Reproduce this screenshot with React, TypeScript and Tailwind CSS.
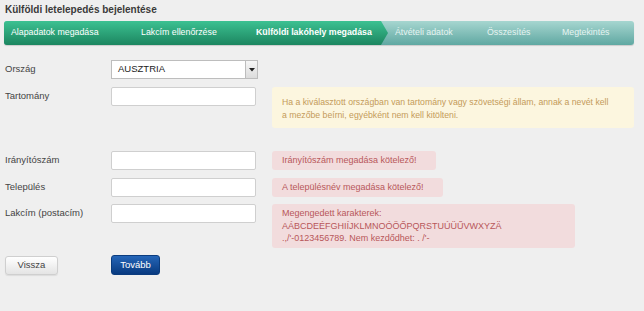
import React from 'react';

const font = "font-['Liberation_Sans',Arial,sans-serif]";

const steps = [
  { label: 'Alapadatok megadása', w: 'w-[130px]', done: true },
  { label: 'Lakcím ellenőrzése', w: 'w-[115px]', done: true },
  { label: 'Külföldi lakóhely megadása', w: 'w-[139px]', done: true, active: true },
];
const nextSteps = [
  { label: 'Átvételi adatok', w: 'w-[92px]' },
  { label: 'Összesítés', w: 'w-[75px]' },
  { label: 'Megtekintés', w: 'w-[72px]' },
];

const FormRow: React.FC<{ label: string; children: React.ReactNode; message?: React.ReactNode; className?: string }> = ({
  label,
  children,
  message,
  className = '',
}) => (
  <div className={`flex items-start ${className}`}>
    <div className="w-[106px] h-[19px] flex items-center text-[9.5px] text-[#444]">{label}</div>
    <div className="w-[161px] flex-shrink-0 flex">{children}</div>
    {message}
  </div>
);

const TextInput: React.FC = () => (
  <div className="w-[145px] h-[19px] bg-white border border-[#cfcfcf] rounded-[2px]" />
);

export default function App() {
  return (
    <div className={`w-[644px] h-[311px] bg-[#efefef] ${font} text-[#333] pl-[5px] pt-[3px]`}>
      {/* Title */}
      <h1 className="text-[10px] font-bold text-[#3a3a3a] h-[13px] leading-[13px]">Külföldi letelepedés bejelentése</h1>

      {/* Wizard steps */}
      <div className="mt-[5px] ml-[-1px] w-[630px] h-[24px] rounded-[3px] overflow-hidden flex bg-gradient-to-b from-[#a6d6d0] to-[#5fa8a2] shadow-[0_1px_1px_rgba(0,0,0,0.15)]">
        <div className="flex h-full bg-gradient-to-b from-[#3cc192] to-[#1c8660] [clip-path:polygon(0_0,calc(100%-7px)_0,100%_50%,calc(100%-7px)_100%,0_100%)]">
          {steps.map((s) => (
            <div
              key={s.label}
              className={`${s.w} h-full flex items-center pl-[7px] text-[8.8px] text-white ${s.active ? 'font-bold' : ''}`}
            >
              {s.label}
            </div>
          ))}
        </div>
        {nextSteps.map((s) => (
          <div key={s.label} className={`${s.w} h-full flex items-center pl-[7px] text-[8.8px] text-[#e6f4f2]`}>
            {s.label}
          </div>
        ))}
      </div>

      {/* Form */}
      <div className="mt-[15px]">
        <FormRow label="Ország">
          <div className="w-[147px] h-[19px] bg-white border border-[#bdbdbd] flex items-center">
            <span className="flex-1 pl-[6px] text-[9.5px] text-[#222]">AUSZTRIA</span>
            <div className="w-[12px] h-[17px] border-l border-[#bdbdbd] bg-gradient-to-b from-[#f6f6f6] to-[#dcdcdc] flex items-center justify-center">
              <svg width="6" height="4" viewBox="0 0 6 4">
                <path d="M0 0h6L3 3.5z" fill="#222" />
              </svg>
            </div>
          </div>
        </FormRow>

        <FormRow
          label="Tartomány"
          className="mt-[8px]"
          message={
            <div className="w-[362px] h-[41px] bg-[#fcf6df] rounded-[3px] pl-[10px] pt-[9px] text-[8.7px] leading-[13px] text-[#c49b5a]">
              Ha a kiválasztott országban van tartomány vagy szövetségi állam, annak a nevét kell
              <br />a mezőbe beírni, egyébként nem kell kitölteni.
            </div>
          }
        >
          <TextInput />
        </FormRow>

        <FormRow
          label="Irányítószám"
          className="mt-[23px]"
          message={
            <div className="w-[164px] h-[19px] bg-[#f2dcdd] rounded-[3px] pl-[10px] flex items-center text-[9px] text-[#b8575a]">
              Irányítószám megadása kötelező!
            </div>
          }
        >
          <TextInput />
        </FormRow>

        <FormRow
          label="Település"
          className="mt-[8px]"
          message={
            <div className="w-[171px] h-[19px] bg-[#f2dcdd] rounded-[3px] pl-[10px] flex items-center text-[9px] text-[#b8575a]">
              A településnév megadása kötelező!
            </div>
          }
        >
          <TextInput />
        </FormRow>

        <FormRow
          label="Lakcím (postacím)"
          className="mt-[7px]"
          message={
            <div className="w-[303px] h-[44px] bg-[#f2dcdd] rounded-[3px] pl-[10px] pt-[3px] text-[9px] leading-[12.5px] text-[#b8575a]">
              Megengedett karakterek:
              <br />
              AÁBCDEÉFGHIÍJKLMNOÓÖŐPQRSTUÚÜŰVWXYZÄ
              <br />
              .,/'-0123456789. Nem kezdődhet: . /'-
            </div>
          }
        >
          <TextInput />
        </FormRow>

        {/* Actions */}
        <div className="flex items-start mt-[8px]">
          <div className="w-[106px] flex">
            <button className="w-[53px] h-[19px] rounded-[3px] border border-[#cfcfcf] bg-gradient-to-b from-white to-[#e4e4e4] text-[9.5px] text-[#444] shadow-[0_1px_1px_rgba(0,0,0,0.08)]">
              Vissza
            </button>
          </div>
          <button className="mt-[-1px] w-[49px] h-[20px] rounded-[3px] border border-[#0b3c7e] bg-gradient-to-b from-[#2566b8] to-[#083a80] text-[9.5px] text-white">
            Tovább
          </button>
        </div>
      </div>
    </div>
  );
}
